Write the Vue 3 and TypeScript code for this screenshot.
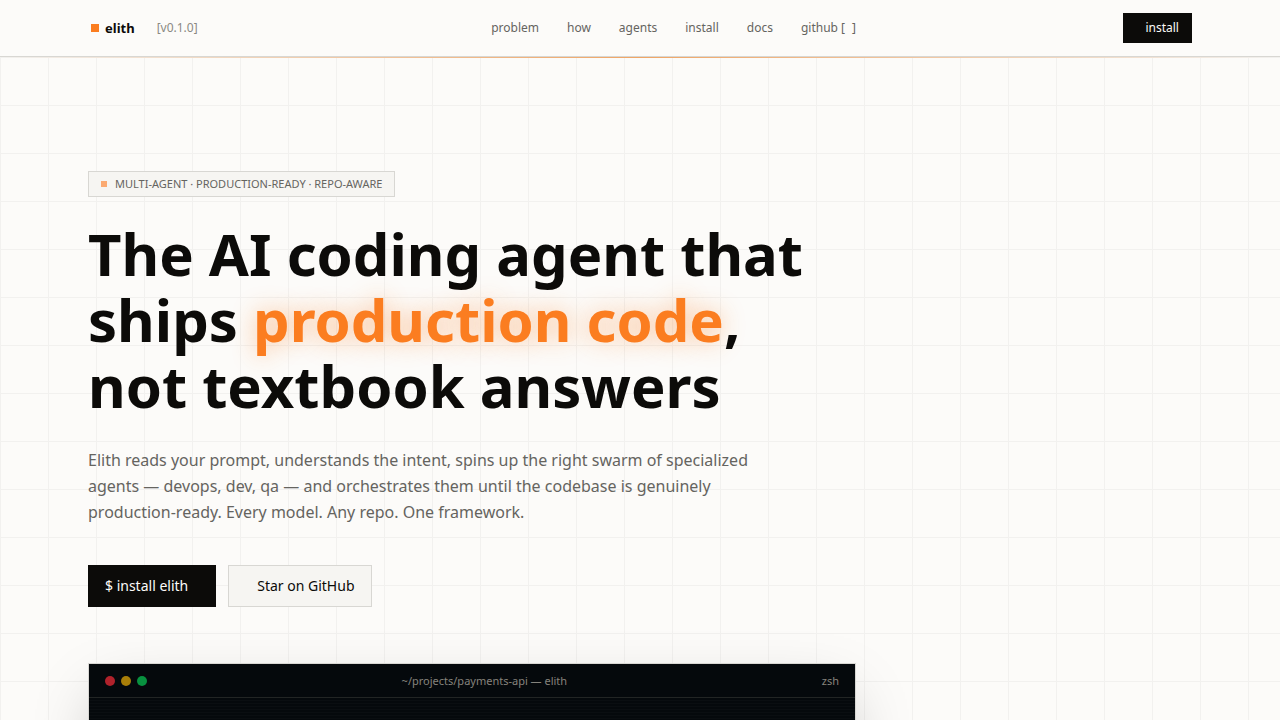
<script setup lang="ts">
interface NavLink {
  label: string
  href: string
}

const links: NavLink[] = [
  { label: 'problem', href: '#problem' },
  { label: 'how', href: '#how' },
  { label: 'agents', href: '#agents' },
  { label: 'install', href: '#install' },
  { label: 'docs', href: '#docs' },
]
</script>

<template>
  <div class="page">
    <header class="topbar">
      <div class="container topbar-inner">
        <div class="brand">
          <a class="brand-link" href="#top"><span class="brand-mark"></span>elith</a>
          <span class="version">[v0.1.0]</span>
        </div>
        <nav class="nav" aria-label="Main">
          <a v-for="link in links" :key="link.label" :href="link.href">{{ link.label }}</a>
          <a class="github" href="#github">github <span class="bracket"><span>[</span><span>]</span></span></a>
        </nav>
        <a class="install" href="#install">install</a>
      </div>
    </header>

    <main class="hero">
      <div class="container">
        <div class="column">
          <p class="badge"><span class="badge-dot"></span>MULTI-AGENT · PRODUCTION-READY · REPO-AWARE</p>
          <h1>
            The AI coding agent that<br />
            ships <span class="accent">production code</span>,<br />
            not textbook answers
          </h1>
          <p class="lead">
            Elith reads your prompt, understands the intent, spins up the right swarm of specialized
            agents — devops, dev, qa — and orchestrates them until the codebase is genuinely
            production-ready. Every model. Any repo. One framework.
          </p>
          <div class="actions">
            <a class="button primary" href="#install">$ install elith</a>
            <a class="button secondary" href="#github">Star on GitHub</a>
          </div>
          <section class="terminal" aria-label="Terminal">
            <div class="terminal-bar">
              <div class="lights">
                <span class="light red"></span>
                <span class="light yellow"></span>
                <span class="light green"></span>
              </div>
              <span class="path">~/projects/payments-api — elith</span>
              <span class="shell">zsh</span>
            </div>
            <div class="terminal-body"></div>
          </section>
        </div>
      </div>
    </main>
  </div>
</template>

<style>
html,
body {
  margin: 0;
  background: #fcfbf9;
}
body {
  overflow: hidden;
}
</style>

<style scoped>
.page {
  height: 100vh;
  overflow: hidden;
  display: flex;
  flex-direction: column;
  font-family: "Noto Sans", "Liberation Sans", sans-serif;
  color: #0c0b09;
  background: #fcfbf9;
}
a {
  color: inherit;
  text-decoration: none;
}
.container {
  box-sizing: border-box;
  width: 100%;
  max-width: 1152px;
  margin: 0 auto;
  padding: 0 24px;
}
.topbar {
  position: relative;
  z-index: 1;
  flex: none;
  border-bottom: 1px solid #d8d7d3;
}
.topbar::after {
  content: "";
  position: absolute;
  left: 0;
  right: 0;
  top: calc(100% + 1px);
  height: 1px;
  background: linear-gradient(90deg, transparent, #f0a565 50%, transparent);
}
.topbar-inner {
  display: flex;
  align-items: center;
  justify-content: space-between;
  height: 56px;
}
.brand {
  display: flex;
  align-items: center;
  gap: 22px;
  padding-right: 26px;
}
.brand-link {
  display: flex;
  align-items: center;
  gap: 6px;
  padding-left: 3px;
  font-size: 13px;
  line-height: 20px;
  font-weight: 700;
}
.brand-mark {
  width: 8px;
  height: 8px;
  background: #fb7d20;
}
.version {
  font-size: 12px;
  line-height: 16px;
  color: #8a8983;
}
.nav {
  display: flex;
  gap: 28px;
  font-size: 12px;
  line-height: 16px;
  color: #65645f;
}
.bracket {
  display: inline-flex;
  gap: 7px;
}
.install {
  padding: 7px 13px 7px 22px;
  font-size: 12px;
  line-height: 16px;
  color: #fcfbf9;
  background: #0c0b09;
}
.hero {
  flex: 1;
  min-height: 0;
  overflow: hidden;
  padding-top: 114px;
  background-image:
    linear-gradient(90deg, #f2f1ef 1px, transparent 1px),
    linear-gradient(#f2f1ef 1px, transparent 1px);
  background-size: 48px 48px;
}
.column {
  max-width: 768px;
}
.badge {
  display: flex;
  align-items: center;
  gap: 8px;
  width: fit-content;
  margin: 0;
  padding: 4px 12px;
  border: 1px solid #d8d7d3;
  font-size: 11px;
  line-height: 16px;
  color: #65645f;
  background: #f6f5f2;
}
.badge-dot {
  width: 6px;
  height: 6px;
  background: #fbaa72;
}
h1 {
  margin: 24px 0 0;
  font-size: 58px;
  line-height: 66px;
  font-weight: 700;
}
.accent {
  color: #fb7d20;
  text-shadow: 0 0 24px rgba(251, 125, 32, 0.45);
}
.lead {
  max-width: 672px;
  margin: 28px 0 0;
  font-size: 16px;
  line-height: 26px;
  color: #65645f;
}
.actions {
  display: flex;
  gap: 12px;
  margin-top: 40px;
}
.button {
  border: 1px solid #0c0b09;
  font-size: 14px;
  line-height: 20px;
}
.primary {
  padding: 10px 27px 10px 16px;
  color: #fcfbf9;
  background: #0c0b09;
}
.secondary {
  padding: 10px 16px 10px 28px;
  border-color: #d8d7d3;
  background: #f6f5f2;
}
.terminal {
  margin-top: 56px;
  border: 1px solid #d8d7d3;
  background: #05090c;
  box-shadow: 0 24px 60px -12px rgba(12, 11, 9, 0.25);
}
.terminal-bar {
  display: flex;
  align-items: center;
  justify-content: space-between;
  padding: 8px 16px;
  border-bottom: 1px solid #222524;
  font-size: 11px;
  line-height: 17px;
  color: #85837c;
}
.lights {
  display: flex;
  gap: 6px;
}
.light {
  width: 10px;
  height: 10px;
  border-radius: 50%;
}
.red {
  background: #b0222b;
}
.yellow {
  background: #a87e08;
}
.green {
  background: #08913f;
}
.terminal-body {
  height: 320px;
  background: repeating-linear-gradient(#05090c 0 2px, #0a0e11 2px 3px);
}
</style>
